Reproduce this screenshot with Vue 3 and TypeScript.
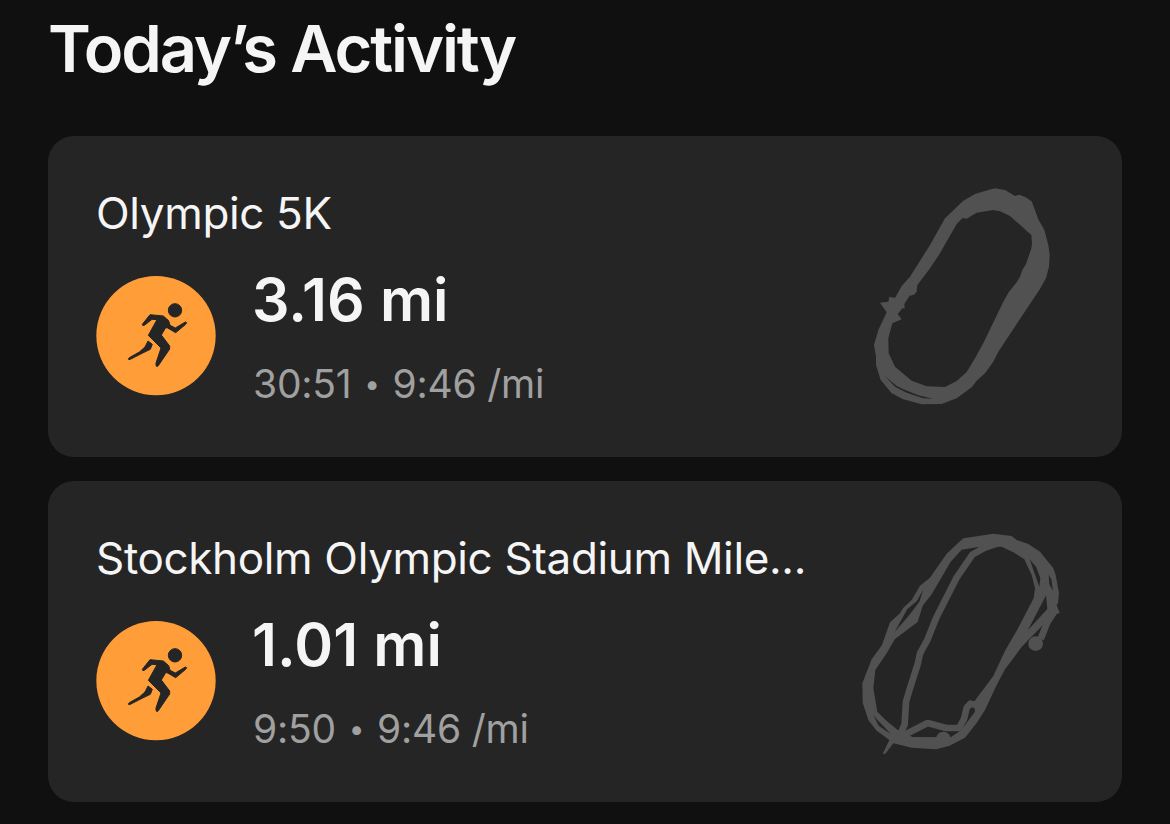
<script setup lang="ts">
interface Activity {
  name: string
  distance: string
  duration: string
  pace: string
  kind: 'track' | 'mile'
}

const activities: Activity[] = [
  { name: 'Olympic 5K', distance: '3.16 mi', duration: '30:51', pace: '9:46 /mi', kind: 'track' },
  { name: 'Stockholm Olympic Stadium Mile...', distance: '1.01 mi', duration: '9:50', pace: '9:46 /mi', kind: 'mile' },
]
</script>

<template>
  <main class="screen">
    <h1 class="title">Today’s Activity</h1>
    <section class="list">
      <article v-for="a in activities" :key="a.name" class="card" :class="a.kind">
        <div class="info">
          <h2 class="name">{{ a.name }}</h2>
          <div class="row">
            <svg class="badge" viewBox="18 18 360 360" aria-hidden="true">
              <circle cx="198" cy="197" r="179" fill="#ff9e38" />
              <g fill="#252525" stroke="#252525" stroke-width="3" stroke-linejoin="round">
                <circle cx="255" cy="121" r="20" />
                <path d="M180 134L220 138L236 152L240 166L256 174L286 156L290 158L287 163L257 188L233 174L227 173L214 195L239 228V237L205 287Q201 292 198 287V279L213 234L175 196L201 149L186 148L163 166Q157 169 157 163Z" />
                <path d="M174 213L187 223L181 238L162 247L121 268Q115 271 115 266L118 263L148 246L165 231Z" />
              </g>
            </svg>
            <div class="stats">
              <p class="distance">{{ a.distance }}</p>
              <p class="meta"><span>{{ a.duration }}</span><i class="dot">•</i><span>{{ a.pace }}</span></p>
            </div>
          </div>
        </div>
        <svg v-if="a.kind === 'track'" class="route" viewBox="0 0 600 690" aria-hidden="true">
          <path fill="#515151" fill-rule="evenodd" d="M405 25L435 30L465 48L478 44L497 52L515 64L535 118L553 150L565 195L569 225L567 260L558 295L538 330L415 515L400 545L375 580L350 602L335 622L290 655L245 672L185 673L130 658L95 640L62 600L48 555L48 530L42 495L55 450L80 397L60 368L85 365L88 350L105 354L125 318L150 290L210 195L255 115L310 62L345 42L385 30ZM400 90L350 98L320 116L308 114L290 132L240 220L208 268L172 315L170 335L162 344L149 347L133 372L134 386L128 384L113 402L125 418L97 430L85 475L86 520L105 560L155 602L200 619L255 621L290 603L320 576L345 535L372 485L430 365L447 335L470 307L480 290L487 270L498 252L514 205L516 190L514 165L450 108L420 94ZM75 588L105 620L140 638L190 655L218 656L175 646L130 628L110 618Z" />
        </svg>
        <svg v-else class="route" viewBox="0 0 660 705" aria-hidden="true">
          <path fill="#515151" fill-rule="evenodd" d="M98 687L106 686L130 655L185 668L258 673L297 663L345 638L380 594L405 555L440 480L465 433L515 366L534 346L606 272L629 264L620 240L624 235L627 205L617 150L610 130L570 80L535 57L500 45L485 33L430 26L340 40L325 53L290 86L240 158L210 182L185 225L160 248L150 265L120 292L96 360L65 403L37 475L38 533L55 585L80 617L118 645ZM455 65L380 67L335 74L302 110L245 208L218 242L203 291L135 342L110 385L76 435L70 490L82 560L110 588L148 619L188 636L302 637L330 618L345 600L375 560L372 530L430 453L465 377L500 317L551 220L555 190L545 150L523 103L490 82ZM539 103L551 137L568 185L571 160L559 127ZM596 149L598 178L609 197L604 163ZM588 211L575 236L534 315L548 300L592 252ZM220 194L200 229L172 252L134 321L178 270L208 230ZM70 570L86 602L122 627L103 606L85 588Z" />
          <g fill="none" stroke="#515151" stroke-width="20" stroke-linejoin="round">
            <path d="M450 53L405 68L367 89L318 161L258 280L232 345L210 385L203 418L180 490L168 530L164 598L150 630" />
            <path d="M158 632L233 594L288 609H327L342 582L350 548L361 536L382 542" />
            <path d="M616 255L591 294L572 342" />
          </g>
          <circle cx="557" cy="356" r="22" fill="#515151" />
          <circle cx="280" cy="642" r="22" fill="#515151" />
        </svg>
      </article>
    </section>
  </main>
</template>

<style scoped>
.screen {
  box-sizing: border-box;
  height: 824px;
  padding: 9px 48px 22px;
  background: #101010;
  color: #f5f5f5;
  font-family: Inter, "Liberation Sans", sans-serif;
  overflow: hidden;
}
h1, h2, p { margin: 0; white-space: nowrap; }
.title {
  height: 127px;
  font-size: 65px;
  line-height: 80px;
  font-weight: 600;
  letter-spacing: -2.1px;
  box-sizing: border-box;
}
.list { display: grid; gap: 24px; }
.card {
  box-sizing: border-box;
  height: 321px;
  padding: 50px 0 0 48px;
  border-radius: 26px;
  background: #252525;
  display: flex;
  justify-content: space-between;
}
.name {
  height: 54px;
  font-size: 44px;
  line-height: 54px;
  font-weight: 400;
  letter-spacing: -0.35px;
}
.row { display: flex; gap: 36px; margin-top: 36px; }
.badge { display: block; width: 120px; height: 120px; }
.stats { margin-top: -11px; }
.distance { font-size: 59px; line-height: 70px; font-weight: 600; letter-spacing: 0.1px; }
.meta {
  margin-top: 24px;
  padding-left: 1px;
  font-size: 39px;
  line-height: 50px;
  letter-spacing: -0.2px;
  color: #a0a0a0;
  display: flex;
}
.dot { font-style: normal; font-size: 28px; width: 41px; text-align: center; }
.route { display: block; flex: none; }
.track .route { width: 200px; height: 230px; margin: -6px 62px 0 0; }
.mile .route { width: 220px; height: 235px; margin: -6px 52px 0 0; }
</style>

<style>
body { background: #101010; }
</style>
